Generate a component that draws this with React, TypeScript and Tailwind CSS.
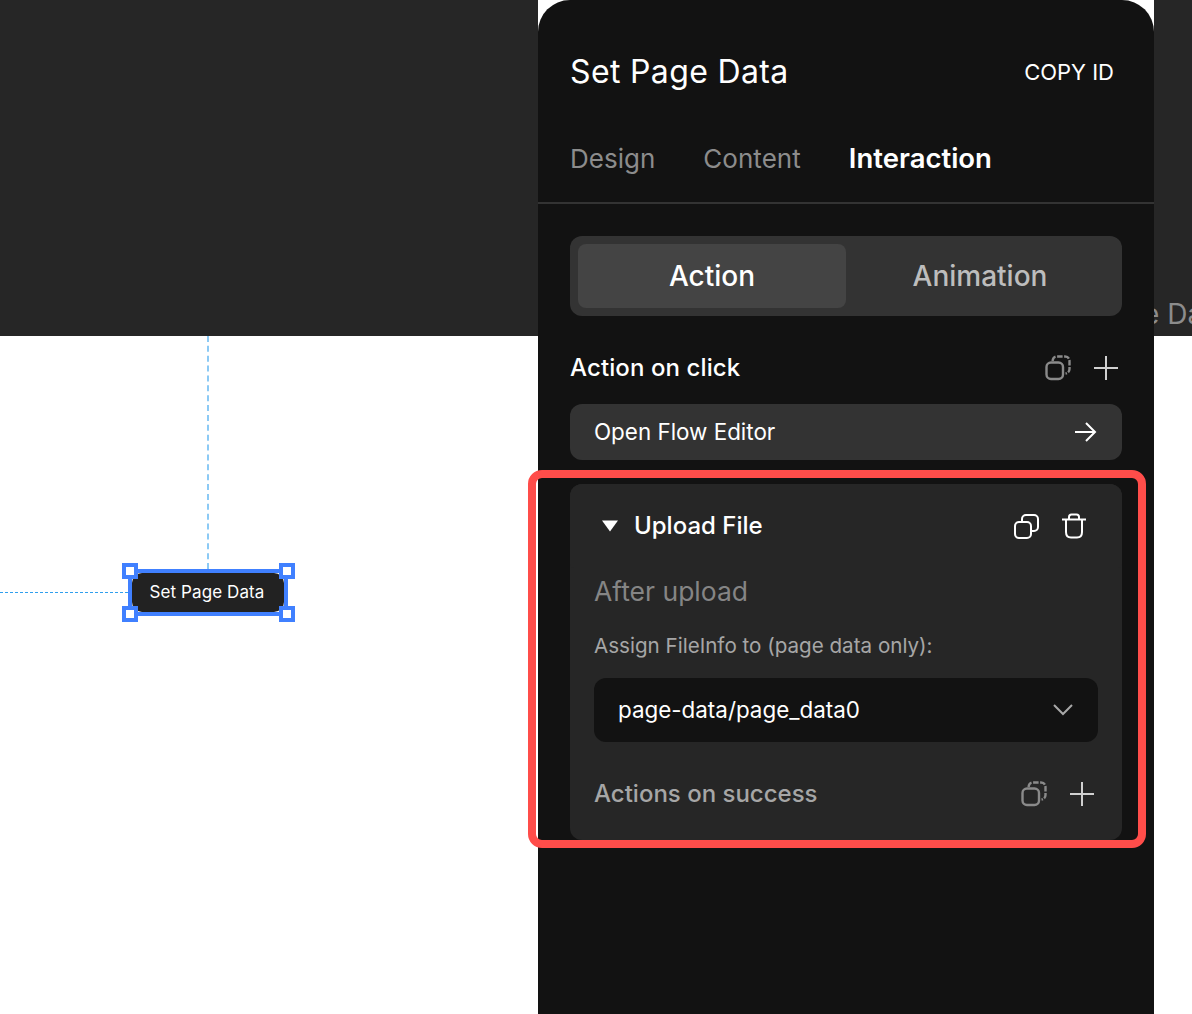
import React from 'react';

const CopyDim = () => (
  <svg width="26" height="26" viewBox="0 0 26 26" fill="none" stroke="#8a8a8a" strokeWidth="2.4">
    <rect x="1.5" y="7.5" width="16.5" height="16.5" rx="4.5" />
    <path d="M7.5 6 C8 3 9.5 1.5 12 1.5 H20 C22.7 1.5 24.5 3.3 24.5 6 V14 C24.5 16.5 23 18 20.5 18.5" strokeDasharray="5.5 1.5" />
  </svg>
);

const Plus = ({ color = '#d0d0d0' }: { color?: string }) => (
  <svg width="24" height="24" viewBox="0 0 24 24" fill="none" stroke={color} strokeWidth="2">
    <path d="M12 0 V24 M0 12 H24" />
  </svg>
);

const CopyIcon = () => (
  <svg width="25" height="25" viewBox="0 0 25 25" fill="none" stroke="white" strokeWidth="2">
    <rect x="1" y="8" width="16" height="16" rx="4" />
    <path d="M8 8 V5 C8 2.8 9.8 1 12 1 H20 C22.2 1 24 2.8 24 5 V13 C24 15.2 22.2 17 20 17 H17" />
  </svg>
);

const TrashIcon = () => (
  <svg width="24" height="26" viewBox="0 0 24 26" fill="none" stroke="white" strokeWidth="2">
    <path d="M0 6.5 H24" />
    <path d="M7 6 V4 C7 2.5 8 1.5 9.5 1.5 H14.5 C16 1.5 17 2.5 17 4 V6" />
    <path d="M4 7 V19 C4 22.5 6 24.5 9 24.5 H15 C18 24.5 20 22.5 20 19 V7" />
  </svg>
);

const Handle = ({ pos }: { pos: string }) => (
  <div className={`absolute w-4 h-4 bg-white border-[4px] border-[#4080ff] ${pos}`} />
);

export default function App() {
  return (
    <div className="relative flex w-[1192px] h-[1014px] overflow-hidden bg-white font-['Inter',sans-serif]">
      {/* canvas */}
      <div className="relative w-[538px] flex flex-col shrink-0">
        <div className="h-[336px] bg-[#262626]" />
        <div className="flex-1 bg-white" />
        <div className="absolute left-[207px] top-[336px] h-[233px] border-l-2 border-dashed border-[#8ccaf5]" />
        <div className="absolute left-0 top-[592px] w-[128px] border-t border-dashed border-[#2f9fee]" />
        <div className="absolute left-[128px] top-[569px] w-[160px] h-[47px] border-[4px] border-[#4080ff]">
          <div className="w-full h-full rounded-[10px] bg-[#222222] text-white text-[17px] leading-none tracking-[0.1px] flex items-center justify-center pr-[2px]">
            Set Page Data
          </div>
          <Handle pos="-left-[10px] -top-[10px]" />
          <Handle pos="left-[147px] -top-[10px]" />
          <Handle pos="-left-[10px] top-[33px]" />
          <Handle pos="left-[147px] top-[33px]" />
        </div>
      </div>

      {/* panel */}
      <div className="w-[616px] shrink-0 h-full bg-[#121212] rounded-t-[32px] text-white">
        <div className="h-[144px] px-8 flex items-center justify-between">
          <span className="text-[32px] leading-none tracking-[0.35px]">Set Page Data</span>
          <span className="text-[22px] leading-none pr-2 -mt-[1px]">COPY ID</span>
        </div>
        <div className="h-[60px] px-8 flex gap-12 border-b-2 border-[#333333] pb-[28px] items-center text-[26px] leading-none text-[#8c8c8c]">
          <span>Design</span>
          <span className="tracking-[0.05px]">Content</span>
          <span className="text-white text-[27.5px] font-semibold">Interaction</span>
        </div>
        <div className="px-8 pt-8">
          <div className="h-20 rounded-[12px] bg-[#333333] p-2 flex text-[28px]">
            <div className="flex-1 rounded-[8px] bg-[#444444] flex items-center justify-center font-medium">Action</div>
            <div className="flex-1 flex items-center justify-center font-medium text-[#bdbdbd]">Animation</div>
          </div>
          <div className="h-[88px] pt-4 flex items-center justify-between pr-1">
            <span className="text-[24px] font-medium tracking-[0.1px]">Action on click</span>
            <div className="flex items-center gap-[23px]">
              <CopyDim />
              <Plus />
            </div>
          </div>
          <div className="h-14 rounded-[12px] bg-[#333333] pl-6 pr-[25px] flex items-center justify-between text-[22.4px]">
            <span className="-mt-[1px]">Open Flow Editor</span>
            <svg width="22" height="20" viewBox="0 0 22 20" fill="none" stroke="white" strokeWidth="2">
              <path d="M0 10 H20 M11 1 L20 10 L11 19" />
            </svg>
          </div>
          <div className="mt-6 h-[356px] rounded-[12px] bg-[#262626]">
            <div className="h-[84px] pl-8 pr-9 flex items-center justify-between rounded-t-[12px] rounded-b-[4px] bg-[#262626]">
              <div className="flex items-center gap-4">
                <svg width="16" height="12" viewBox="0 0 16 12"><path d="M0 0.5 H16 L8 11.5 Z" fill="white" /></svg>
                <span className="text-[24px] font-medium">Upload File</span>
              </div>
              <div className="flex items-center gap-[23px]">
                <CopyIcon />
                <TrashIcon />
              </div>
            </div>
            <div className="px-6">
              <div className="text-[26.5px] leading-[48px] -mt-[1px] text-[#858585]">After upload</div>
              <div className="mt-[15px] text-[20.6px] leading-[32px] text-[#a6a6a6]">Assign FileInfo to (page data only):</div>
              <div className="mt-[16px] h-16 rounded-[12px] bg-[#121212] pl-6 pr-[25px] flex items-center justify-between text-[22.4px]">
                <span>page-data/page_data0</span>
                <svg width="20" height="12" viewBox="0 0 20 12" fill="none" stroke="#a8a8a8" strokeWidth="2">
                  <path d="M1 1 L10 10 L19 1" />
                </svg>
              </div>
              <div className="mt-6 h-[56px] flex items-center justify-between pr-1">
                <span className="text-[24px] font-medium text-[#a6a6a6]">Actions on success</span>
                <div className="flex items-center gap-[23px]">
                  <CopyDim />
                  <Plus />
                </div>
              </div>
            </div>
          </div>
        </div>
      </div>

      {/* sliver of the canvas right of the panel */}
      <div className="flex-1 h-[336px] bg-[#262626] overflow-hidden relative">
        <span className="absolute -left-[11px] top-[296px] text-[28px] leading-[36px] text-[#8c8c8c] whitespace-nowrap">e Da</span>
      </div>

      {/* annotation */}
      <div className="absolute left-[528px] top-[470px] w-[618px] h-[378px] rounded-[14px] border-[8px] border-[#ff4d4a]" />
    </div>
  );
}
